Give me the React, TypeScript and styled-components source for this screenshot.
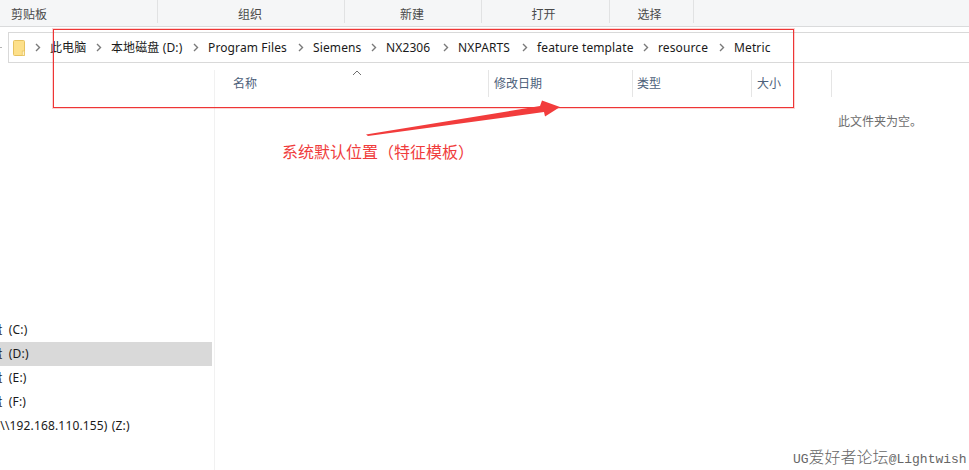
import React from "react";
import styled, { createGlobalStyle } from "styled-components";

const Global = createGlobalStyle`
  html, body { margin: 0; padding: 0; background: #fff; overflow: hidden; }
  #root { width: 969px; height: 470px; }
`;

const FONT = `"Noto Sans", "Noto Sans CJK SC", sans-serif`;

const Page = styled.div`
  position: relative;
  width: 969px;
  height: 470px;
  overflow: hidden;
  background: #fff;
  font-family: ${FONT};
  font-size: 12px;
  color: #1c1c1c;
`;

const Ribbon = styled.div`
  display: flex;
  height: 26px;
  background: #f5f6f7;
  border-bottom: 1px solid #dadbdc;
`;

const RibbonGroup = styled.div<{ $w: number; $left?: boolean; $nudge?: number }>`
  width: ${(p) => p.$w}px;
  height: 23px;
  box-sizing: border-box;
  border-right: 1px solid #e1e2e3;
  display: flex;
  align-items: center;
  justify-content: ${(p) => (p.$left ? "flex-start" : "center")};
  padding: 7px ${(p) => p.$nudge ?? 0}px 0 ${(p) => (p.$left ? 11 : 0)}px;
  color: #4a4a4a;
  line-height: 16px;
`;

const BackHint = styled.div`
  position: absolute;
  left: 0;
  top: 47px;
  width: 2px;
  height: 1px;
  background: #b4b4b4;
`;

const AddressBar = styled.div`
  display: flex;
  align-items: center;
  height: 31px;
  margin: 5px 0 0 8px;
  box-sizing: border-box;
  border: 1px solid #d9d9d9;
  border-right: none;
  padding-left: 4px;
`;

const FolderIcon = styled.svg`
  width: 12px;
  height: 16px;
  flex: none;
`;

const Crumbs = styled.div`
  display: flex;
  align-items: center;
  line-height: 16px;
`;

const Crumb = styled.span<{ $w: number }>`
  width: ${(p) => p.$w}px;
  white-space: nowrap;
  color: #1a1a1a;
  letter-spacing: 0.12px;
`;

const Chevron = styled.svg`
  width: 25px;
  height: 9px;
  flex: none;
`;

const Body = styled.div`
  display: grid;
  grid-template-columns: 215px 1fr;
  height: 407px;
`;

const Sidebar = styled.div`
  box-sizing: border-box;
  border-right: 1px solid #f1f1f1;
  padding: 248px 2px 0 0;
  overflow: hidden;
  margin-top: 7px;
  height: 400px;
`;

const DriveRow = styled.div<{ $active?: boolean }>`
  height: 24px;
  line-height: 24px;
  white-space: nowrap;
  overflow: hidden;
  color: #1a1a1a;
  background: ${(p) => (p.$active ? "#d9d9d9" : "transparent")};
`;

const DriveLabel = styled.span<{ $shift: number; $space: number }>`
  display: inline-block;
  margin-left: ${(p) => p.$shift}px;
  word-spacing: ${(p) => p.$space}px;
  letter-spacing: 0.15px;
`;

const Main = styled.div`
  display: flex;
  flex-direction: column;
`;

const ColumnHeader = styled.div`
  display: flex;
  height: 27px;
  margin-top: 7px;
`;

const Column = styled.div<{ $w: number; $pad: number; $sep?: boolean }>`
  position: relative;
  width: ${(p) => p.$w}px;
  box-sizing: border-box;
  padding-left: ${(p) => p.$pad}px;
  border-right: ${(p) => (p.$sep ? "1px solid #e5e5e5" : "none")};
  color: #4c607a;
  line-height: 27px;
`;

const SortCaret = styled.svg`
  position: absolute;
  left: 137px;
  top: 0;
  width: 10px;
  height: 6px;
`;

const EmptyNote = styled.div`
  align-self: flex-end;
  margin: 17px 52px 0 0;
  color: #6d6d6d;
  line-height: 16px;
  width: 79px;
  white-space: nowrap;
`;

const Highlight = styled.div`
  position: absolute;
  left: 53px;
  top: 29px;
  width: 741px;
  height: 79px;
  box-sizing: border-box;
  border: 1px solid #ee3535;
  box-shadow: 0 0 0 1px rgba(238, 53, 53, 0.22);
  z-index: 2;
`;

const Arrow = styled.svg`
  position: absolute;
  left: 360px;
  top: 95px;
  width: 210px;
  height: 45px;
  z-index: 3;
`;

const Caption = styled.div`
  position: absolute;
  left: 282px;
  top: 141px;
  font-size: 16px;
  line-height: 22px;
  color: #f03c3c;
  white-space: nowrap;
`;

const Watermark = styled.div`
  position: absolute;
  left: 793px;
  top: 450px;
  font-family: "Liberation Mono", "Noto Sans CJK SC", monospace;
  font-size: 13px;
  line-height: 18px;
  color: #666;
  white-space: nowrap;
`;

const WatermarkCjk = styled.span`
  font-size: 16px;
  font-weight: 300;
`;

const crumbs: [string, number][] = [
  ["此电脑", 36],
  ["本地磁盘 (D:)", 72],
  ["Program Files", 80],
  ["Siemens", 48],
  ["NX2306", 47],
  ["NXPARTS", 54],
  ["feature template", 96],
  ["resource", 51],
  ["Metric", 38],
];

const drives: [string, number, number, boolean][] = [
  ["本地磁盘 (C:)", -46, 3, false],
  ["本地磁盘 (D:)", -46, 3, true],
  ["本地磁盘 (E:)", -46, 3, false],
  ["本地磁盘 (F:)", -46, 3, false],
  ["共享 (\\\\192.168.110.155) (Z:)", -32, 1, false],
];

const Chev = () => (
  <Chevron viewBox="0 0 25 9">
    <path d="M11 1 L14.5 4.5 L11 8" fill="none" stroke="#7a7a7a" strokeWidth="1.4" />
  </Chevron>
);

export default function App() {
  return (
    <Page>
      <Global />
      <Ribbon>
        <RibbonGroup $w={158} $left>剪贴板</RibbonGroup>
        <RibbonGroup $w={187} $nudge={2}>组织</RibbonGroup>
        <RibbonGroup $w={137} $nudge={2}>新建</RibbonGroup>
        <RibbonGroup $w={128} $nudge={4}>打开</RibbonGroup>
        <RibbonGroup $w={84} $nudge={4}>选择</RibbonGroup>
      </Ribbon>
      <BackHint />
      <AddressBar>
        <FolderIcon viewBox="0 0 12 16">
          <path d="M0.5 1.5 Q0.5 0.5 1.5 0.5 H10.5 Q11.5 0.5 11.5 1.5 V15.5 H1.5 Q0.5 15.5 0.5 14.5 Z" fill="#fde08a" stroke="#e6c260" />
          <rect x="9.2" y="11" width="2.3" height="4.5" fill="#fff2c4" stroke="#e6c260" strokeWidth="0.7" />
        </FolderIcon>
        <Crumbs>
          <Chev />
          {crumbs.map(([t, w], i) => (
            <React.Fragment key={t}>
              {i > 0 && <Chev />}
              <Crumb $w={w}>{t}</Crumb>
            </React.Fragment>
          ))}
        </Crumbs>
      </AddressBar>
      <Body>
        <Sidebar>
          {drives.map(([t, s, w, a]) => (
            <DriveRow key={t} $active={a}>
              <DriveLabel $shift={s} $space={w}>{t}</DriveLabel>
            </DriveRow>
          ))}
        </Sidebar>
        <Main>
          <ColumnHeader>
            <Column $w={274} $pad={18} $sep>
              名称
              <SortCaret viewBox="0 0 10 6">
                <path d="M1 5 L5 1 L9 5" fill="none" stroke="#6f6f6f" />
              </SortCaret>
            </Column>
            <Column $w={144} $pad={5} $sep>修改日期</Column>
            <Column $w={119} $pad={4} $sep>类型</Column>
            <Column $w={80} $pad={5} $sep>大小</Column>
          </ColumnHeader>
          <EmptyNote>此文件夹为空。</EmptyNote>
        </Main>
      </Body>
      <Highlight />
      <Arrow viewBox="360 95 210 45">
        <polygon points="366,134.5 540,106 542,100.5 560,107 545,116.5 544,112 368,136" fill="#f23c3c" />
      </Arrow>
      <Caption>系统默认位置（特征模板）</Caption>
      <Watermark>
        UG<WatermarkCjk>爱好者论坛</WatermarkCjk>@Lightwish
      </Watermark>
    </Page>
  );
}
